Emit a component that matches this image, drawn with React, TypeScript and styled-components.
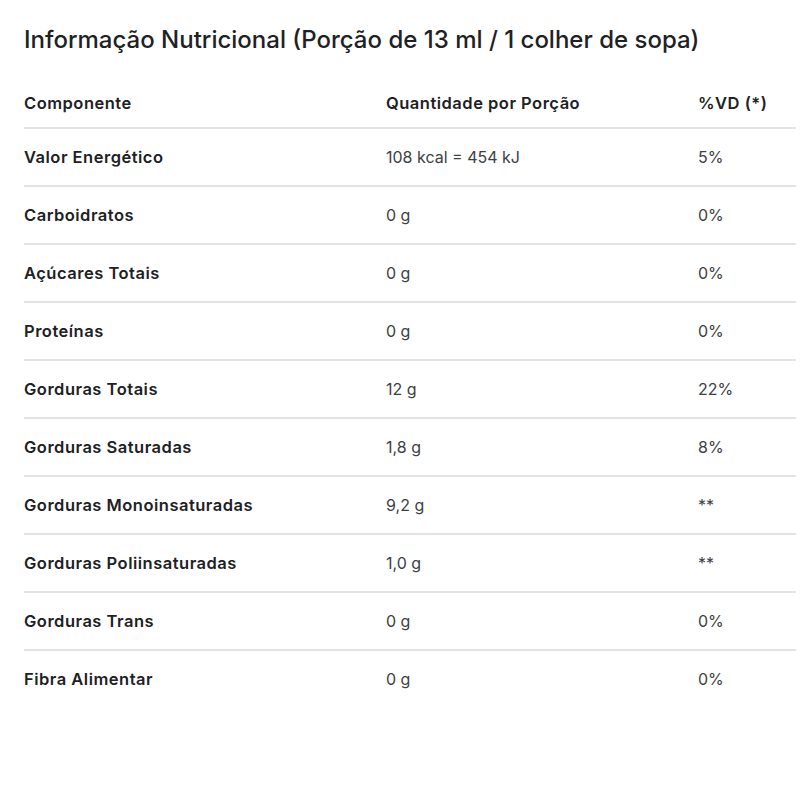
import React from "react";
import styled, { createGlobalStyle } from "styled-components";

const Global = createGlobalStyle`
  html, body { margin: 0; padding: 0; background: #ffffff; }
  body { font-family: Inter, "Noto Sans", Roboto, sans-serif; -webkit-font-smoothing: antialiased; }
`;

const Page = styled.div`
  padding: 24px 4px 0 24px;
`;

const Title = styled.h2`
  margin: 0 0 22px 0;
  font-size: 24px;
  line-height: 32px;
  font-weight: 500;
  color: #202124;
  letter-spacing: 0;
`;

const Table = styled.table`
  width: 772px;
  border-collapse: collapse;
  table-layout: fixed;
`;

const Col = styled.col<{ $w: number }>`
  width: ${(p) => p.$w}px;
`;

const HeadCell = styled.th`
  text-align: left;
  font-size: 16.5px;
  font-weight: 600;
  letter-spacing: 0.5px;
  color: #202124;
  height: 49px;
  padding: 0;
  vertical-align: middle;
  border-bottom: 2px solid #e3e3e3;
`;

const Row = styled.tr`
  & + & td {
    border-top: 2px solid #e3e3e3;
  }
`;

const LabelCell = styled.td`
  font-size: 16.5px;
  font-weight: 600;
  letter-spacing: 0.5px;
  color: #202124;
  height: 56px;
  padding: 0;
  vertical-align: middle;
`;

const ValueCell = styled.td`
  font-size: 16px;
  font-weight: 400;
  color: #3c4043;
  height: 56px;
  padding: 0;
  vertical-align: middle;
`;

const rows: [string, string, string][] = [
  ["Valor Energético", "108 kcal = 454 kJ", "5%"],
  ["Carboidratos", "0 g", "0%"],
  ["Açúcares Totais", "0 g", "0%"],
  ["Proteínas", "0 g", "0%"],
  ["Gorduras Totais", "12 g", "22%"],
  ["Gorduras Saturadas", "1,8 g", "8%"],
  ["Gorduras Monoinsaturadas", "9,2 g", "**"],
  ["Gorduras Poliinsaturadas", "1,0 g", "**"],
  ["Gorduras Trans", "0 g", "0%"],
  ["Fibra Alimentar", "0 g", "0%"],
];

export default function App() {
  return (
    <Page>
      <Global />
      <Title>Informação Nutricional (Porção de 13 ml / 1 colher de sopa)</Title>
      <Table>
        <colgroup>
          <Col $w={362} />
          <Col $w={312} />
          <Col $w={98} />
        </colgroup>
        <thead>
          <tr>
            <HeadCell>Componente</HeadCell>
            <HeadCell>Quantidade por Porção</HeadCell>
            <HeadCell>%VD (*)</HeadCell>
          </tr>
        </thead>
        <tbody>
          {rows.map(([a, b, c]) => (
            <Row key={a}>
              <LabelCell>{a}</LabelCell>
              <ValueCell>{b}</ValueCell>
              <ValueCell>{c}</ValueCell>
            </Row>
          ))}
        </tbody>
      </Table>
    </Page>
  );
}
